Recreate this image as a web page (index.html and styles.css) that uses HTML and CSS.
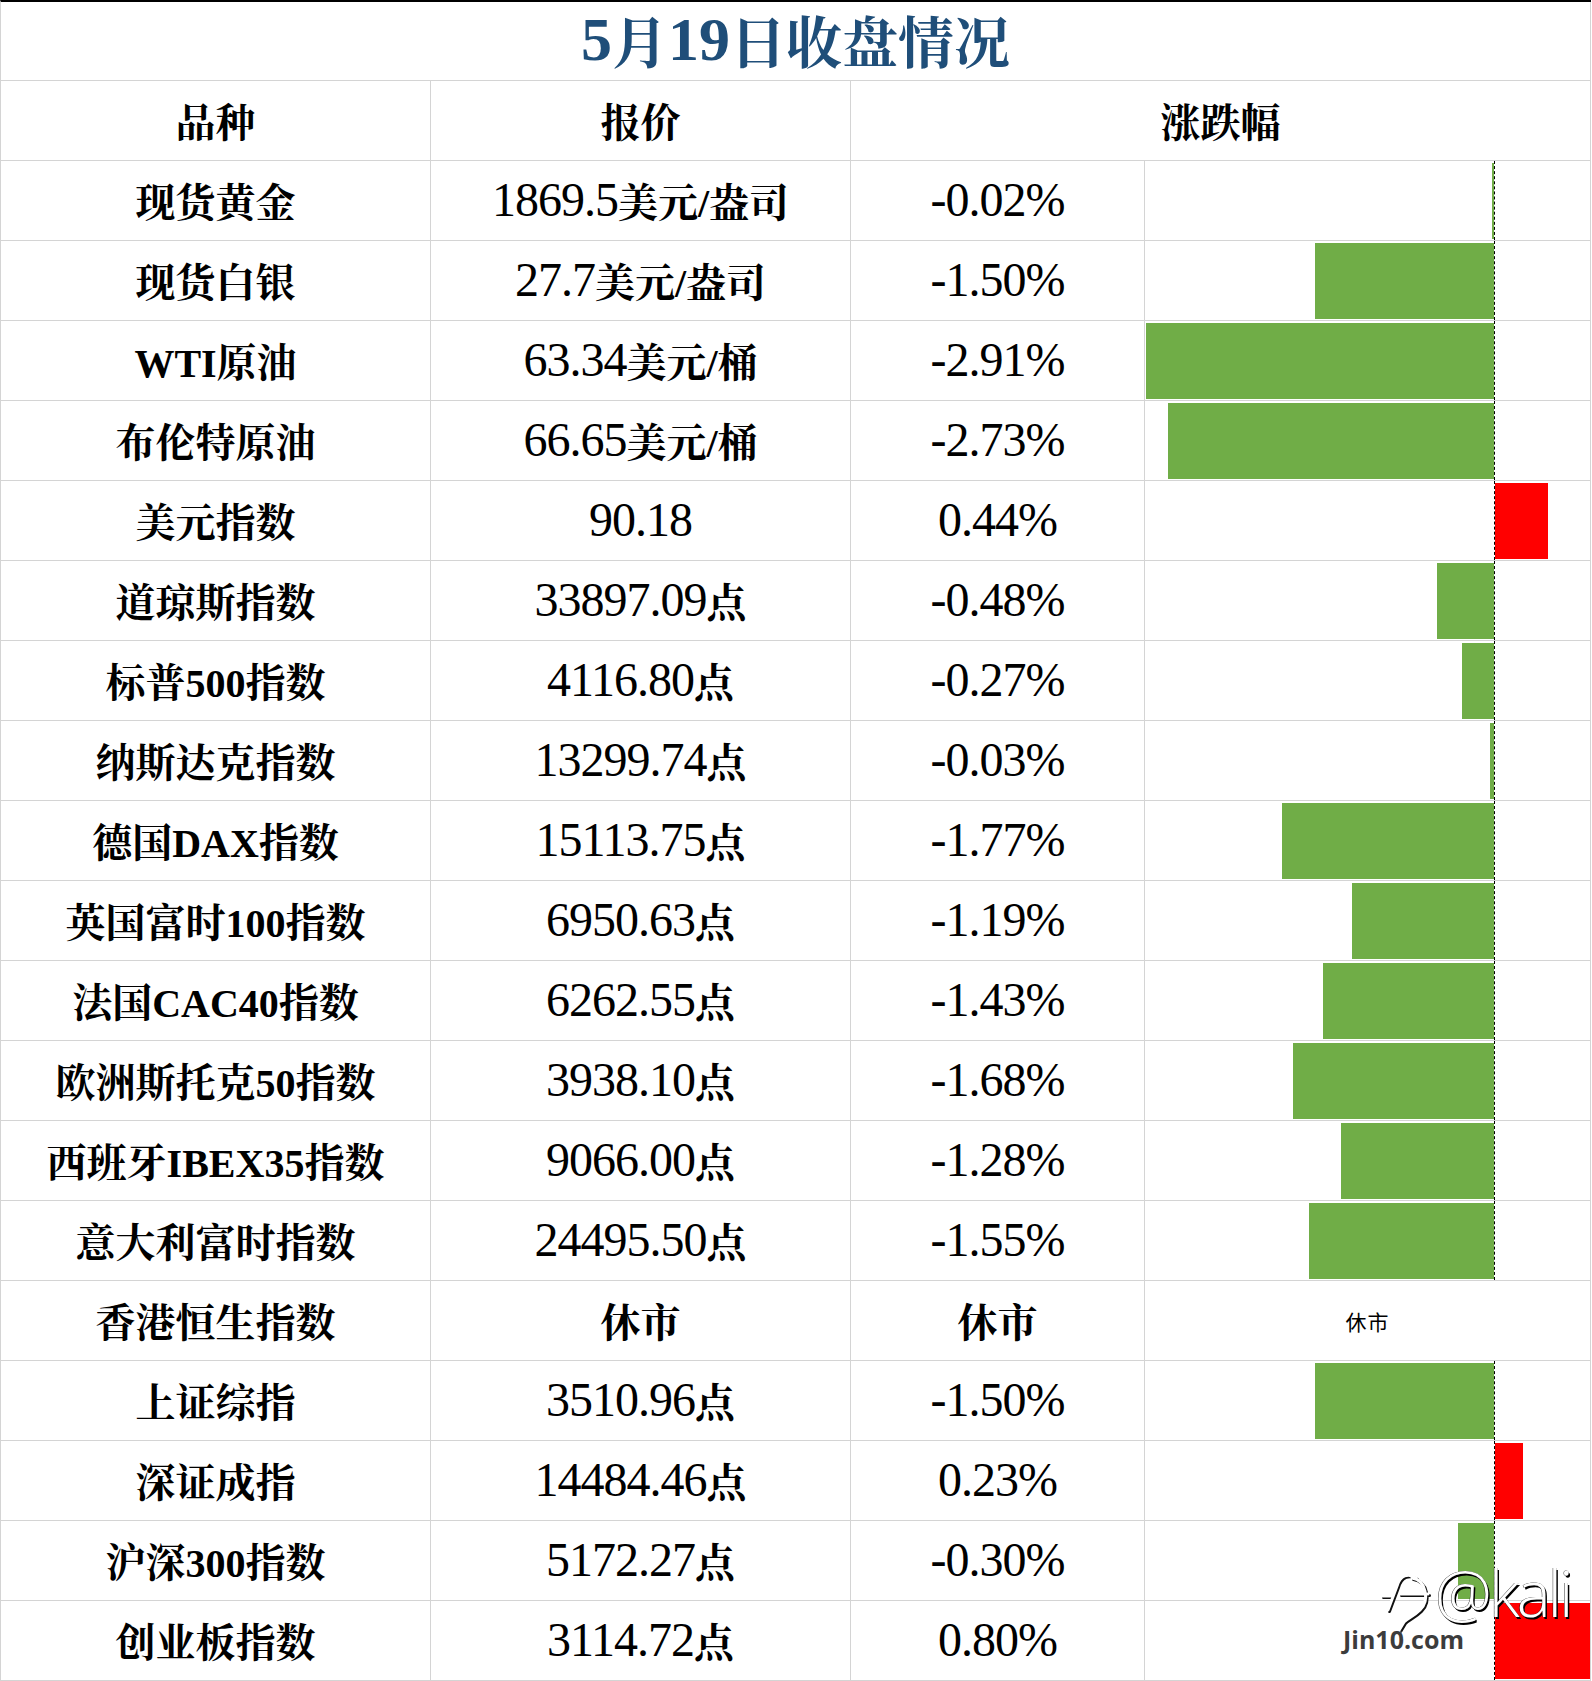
FILE: index.html
```html
<!DOCTYPE html>
<html lang="zh-CN">
<head>
<meta charset="utf-8">
<title>5月19日收盘情况</title>
<link rel="stylesheet" href="styles.css">
</head>
<body>
<div class="page">
  <div class="sheet">
    <div class="title"><span class="tnum">5</span>月<span class="tnum">19</span>日收盘情况</div>

    <div class="c name head">品种</div>
    <div class="c head">报价</div>
    <div class="c headspan head">涨跌幅</div>

    <div class="c name">现货黄金</div>
    <div class="c price">1869.5<span class="u">美元/盎司</span></div>
    <div class="c pct">-0.02%</div>
    <div class="c chart"><div class="neg"><div class="bar g" style="width:2.4px"></div></div><div class="pos"></div></div>

    <div class="c name">现货白银</div>
    <div class="c price">27.7<span class="u">美元/盎司</span></div>
    <div class="c pct">-1.50%</div>
    <div class="c chart"><div class="neg"><div class="bar g" style="width:179.4px"></div></div><div class="pos"></div></div>

    <div class="c name">WTI原油</div>
    <div class="c price">63.34<span class="u">美元/桶</span></div>
    <div class="c pct">-2.91%</div>
    <div class="c chart"><div class="neg"><div class="bar g" style="width:348px"></div></div><div class="pos"></div></div>

    <div class="c name">布伦特原油</div>
    <div class="c price">66.65<span class="u">美元/桶</span></div>
    <div class="c pct">-2.73%</div>
    <div class="c chart"><div class="neg"><div class="bar g" style="width:326.5px"></div></div><div class="pos"></div></div>

    <div class="c name">美元指数</div>
    <div class="c price">90.18</div>
    <div class="c pct">0.44%</div>
    <div class="c chart"><div class="neg"></div><div class="pos"><div class="bar r" style="width:52.6px"></div></div></div>

    <div class="c name">道琼斯指数</div>
    <div class="c price">33897.09<span class="u">点</span></div>
    <div class="c pct">-0.48%</div>
    <div class="c chart"><div class="neg"><div class="bar g" style="width:57.4px"></div></div><div class="pos"></div></div>

    <div class="c name">标普500指数</div>
    <div class="c price">4116.80<span class="u">点</span></div>
    <div class="c pct">-0.27%</div>
    <div class="c chart"><div class="neg"><div class="bar g" style="width:32.3px"></div></div><div class="pos"></div></div>

    <div class="c name">纳斯达克指数</div>
    <div class="c price">13299.74<span class="u">点</span></div>
    <div class="c pct">-0.03%</div>
    <div class="c chart"><div class="neg"><div class="bar g" style="width:3.6px"></div></div><div class="pos"></div></div>

    <div class="c name">德国DAX指数</div>
    <div class="c price">15113.75<span class="u">点</span></div>
    <div class="c pct">-1.77%</div>
    <div class="c chart"><div class="neg"><div class="bar g" style="width:211.7px"></div></div><div class="pos"></div></div>

    <div class="c name">英国富时100指数</div>
    <div class="c price">6950.63<span class="u">点</span></div>
    <div class="c pct">-1.19%</div>
    <div class="c chart"><div class="neg"><div class="bar g" style="width:142.3px"></div></div><div class="pos"></div></div>

    <div class="c name">法国CAC40指数</div>
    <div class="c price">6262.55<span class="u">点</span></div>
    <div class="c pct">-1.43%</div>
    <div class="c chart"><div class="neg"><div class="bar g" style="width:171px"></div></div><div class="pos"></div></div>

    <div class="c name">欧洲斯托克50指数</div>
    <div class="c price">3938.10<span class="u">点</span></div>
    <div class="c pct">-1.68%</div>
    <div class="c chart"><div class="neg"><div class="bar g" style="width:201px"></div></div><div class="pos"></div></div>

    <div class="c name">西班牙IBEX35指数</div>
    <div class="c price">9066.00<span class="u">点</span></div>
    <div class="c pct">-1.28%</div>
    <div class="c chart"><div class="neg"><div class="bar g" style="width:153px"></div></div><div class="pos"></div></div>

    <div class="c name">意大利富时指数</div>
    <div class="c price">24495.50<span class="u">点</span></div>
    <div class="c pct">-1.55%</div>
    <div class="c chart"><div class="neg"><div class="bar g" style="width:185.4px"></div></div><div class="pos"></div></div>

    <div class="c name">香港恒生指数</div>
    <div class="c price"><span class="u">休市</span></div>
    <div class="c pct"><span class="u">休市</span></div>
    <div class="c chart closed">休市</div>

    <div class="c name">上证综指</div>
    <div class="c price">3510.96<span class="u">点</span></div>
    <div class="c pct">-1.50%</div>
    <div class="c chart"><div class="neg"><div class="bar g" style="width:179.4px"></div></div><div class="pos"></div></div>

    <div class="c name">深证成指</div>
    <div class="c price">14484.46<span class="u">点</span></div>
    <div class="c pct">0.23%</div>
    <div class="c chart"><div class="neg"></div><div class="pos"><div class="bar r" style="width:27.5px"></div></div></div>

    <div class="c name">沪深300指数</div>
    <div class="c price">5172.27<span class="u">点</span></div>
    <div class="c pct">-0.30%</div>
    <div class="c chart"><div class="neg"><div class="bar g" style="width:35.9px"></div></div><div class="pos"></div></div>

    <div class="c name">创业板指数</div>
    <div class="c price">3114.72<span class="u">点</span></div>
    <div class="c pct">0.80%</div>
    <div class="c chart"><div class="neg"></div><div class="pos"><div class="bar r" style="width:96px"></div></div></div>
  </div>

  <div class="watermark">
    <svg class="wm-logo" width="54" height="68" viewBox="0 0 54 68">
      <g class="wm-shadow" transform="translate(1.5,1.5)">
        <path d="M38 8 C30 2 22 6 19 16 L10 40"/>
        <path d="M4 26 L14 26 M22 24 L50 24"/>
        <path d="M34 8 C48 10 52 30 42 40 C36 46 30 48 26 52 L20 62"/>
      </g>
      <g class="wm-stroke">
        <path d="M38 8 C30 2 22 6 19 16 L10 40"/>
        <path d="M4 26 L14 26 M22 24 L50 24"/>
        <path d="M34 8 C48 10 52 30 42 40 C36 46 30 48 26 52 L20 62"/>
      </g>
    </svg>
    <div class="wm-name">@kali</div>
    <div class="wm-site">Jin10.com</div>
  </div>
</div>
</body>
</html>
```

FILE: styles.css
```css
* { box-sizing: border-box; }

html, body {
  margin: 0;
  padding: 0;
  background: #ffffff;
}

.page {
  position: relative;
  width: 1592px;
  height: 1681px;
  overflow: hidden;
}

.sheet {
  display: grid;
  grid-template-columns: 430px 420px 294px 446px;
  grid-template-rows: 79px repeat(20, 80px);
  border-top: 2px solid #000;
  border-left: 1px solid #d4d4d4;
  width: 1591px;
  font-family: "Liberation Serif", "Noto Serif CJK SC", "Noto Sans CJK SC", serif;
  color: #000;
}

.title {
  grid-column: 1 / 5;
  border-right: 1px solid #d4d4d4;
  border-bottom: 1px solid #d4d4d4;
  display: flex;
  align-items: center;
  justify-content: center;
  padding-bottom: 4px;
  font-size: 56px;
  font-weight: 700;
  color: #1f4e79;
}

.title .tnum {
  font-size: 62px;
  font-family: "Liberation Serif", serif;
}

.c {
  border-right: 1px solid #d4d4d4;
  border-bottom: 1px solid #d4d4d4;
  display: flex;
  align-items: center;
  justify-content: center;
  white-space: nowrap;
  padding-bottom: 3px;
}

.name {
  font-size: 40px;
  font-weight: 700;
}

.price,
.pct {
  font-size: 48px;
  font-weight: 400;
  letter-spacing: -1px;
}

.c.head {
  font-size: 40px;
  font-weight: 700;
  letter-spacing: 0;
}

.headspan {
  grid-column: 3 / 5;
}

.u {
  font-size: 40px;
  font-weight: 700;
  letter-spacing: 0;
}

.chart {
  justify-content: flex-start;
  align-items: stretch;
  padding-bottom: 0;
}

.neg {
  width: 350px;
  flex: none;
  border-right: 1px dashed #000;
  display: flex;
  justify-content: flex-end;
  padding: 2px 0 1px;
}

.pos {
  flex: 1;
  display: flex;
  justify-content: flex-start;
  padding: 2px 0 1px;
  overflow: hidden;
}

.bar {
  height: 100%;
  flex: none;
}

.bar.g { background: #70ad47; }
.bar.r { background: #ff0000; }

.chart.closed {
  justify-content: center;
  align-items: center;
  font-family: "Noto Sans CJK SC", sans-serif;
  font-size: 21px;
  font-weight: 400;
  letter-spacing: 1px;
}

/* watermark overlay */
.watermark {
  position: absolute;
  left: 1340px;
  top: 1560px;
  width: 252px;
  height: 121px;
  pointer-events: none;
}

.wm-logo {
  position: absolute;
  left: 38px;
  top: 10px;
}

.wm-logo path {
  fill: none;
  stroke-width: 3;
  stroke-linecap: round;
}

.wm-shadow path { stroke: #111; }
.wm-stroke path { stroke: #ffffff; }

.wm-name {
  position: absolute;
  left: 95px;
  top: 6px;
  font-family: "Open Sans", "Noto Sans", sans-serif;
  font-weight: 300;
  font-size: 64px;
  line-height: 0.85;
  letter-spacing: -3px;
  color: #ffffff;
  text-shadow: 1.5px 1.5px 0.5px #000, -0.5px 0 0.5px rgba(0,0,0,0.7), 0 -0.5px 0.5px rgba(0,0,0,0.7);
}

.wm-site {
  position: absolute;
  left: 3px;
  top: 67px;
  font-family: "Open Sans", "Noto Sans", sans-serif;
  font-weight: 700;
  font-size: 25px;
  line-height: 1;
  color: #3c3c3c;
  text-shadow: 0 0 2px #ffffff;
}
```
